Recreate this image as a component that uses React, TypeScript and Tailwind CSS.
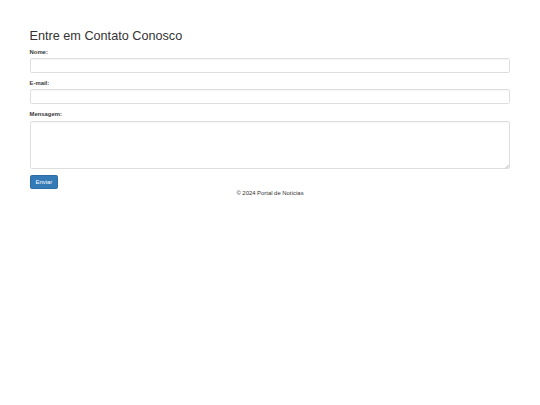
import React from "react";

export default function App() {
  return (
    <div
      className="min-h-[405px] w-[540px] bg-white pt-[21.09px] text-[#333]"
      style={{ fontFamily: '"Liberation Sans", Arial, Helvetica, sans-serif' }}
    >
      <div className="mx-auto w-[493.59px] px-[6.33px]">
        <h2 className="mt-[8.44px] mb-[4.22px] text-[12.66px] leading-[13.92px] font-normal text-[#333]">
          Entre em Contato Conosco
        </h2>
        <form>
          <div className="mb-[6.33px]">
            <label className="block mb-[2.11px] text-[5.9px] leading-[8.44px] font-bold text-[#3a3a3a]">Nome:</label>
            <input
              type="text"
              className="block w-full h-[14.34px] px-[5.06px] py-[2.53px] border border-[#dedede] rounded-[1.69px] bg-white shadow-[inset_0_0.42px_0.42px_rgba(0,0,0,0.075)] outline-none"
            />
          </div>
          <div className="mb-[6.33px]">
            <label className="block mb-[2.11px] text-[5.9px] leading-[8.44px] font-bold text-[#3a3a3a]">E-mail:</label>
            <input
              type="email"
              className="block w-full h-[14.34px] px-[5.06px] py-[2.53px] border border-[#dedede] rounded-[1.69px] bg-white shadow-[inset_0_0.42px_0.42px_rgba(0,0,0,0.075)] outline-none"
            />
          </div>
          <div className="mb-[6.33px]">
            <label className="block mb-[2.11px] text-[5.9px] leading-[8.44px] font-bold text-[#3a3a3a]">Mensagem:</label>
            <div className="relative">
              <textarea
                className="block w-full h-[48.1px] px-[5.06px] py-[2.53px] border border-[#dedede] rounded-[1.69px] bg-white shadow-[inset_0_0.42px_0.42px_rgba(0,0,0,0.075)] outline-none resize-none"
              />
              <svg
                className="absolute right-[1px] bottom-[1px] w-[4px] h-[4px]"
                viewBox="0 0 4 4"
              >
                <path d="M4 0.5 L0.5 4 M4 2.2 L2.2 4" stroke="#9a9a9a" strokeWidth="0.6" />
              </svg>
            </div>
          </div>
          <button
            type="button"
            className="block h-[14.34px] px-[5.06px] text-[5.9px] leading-[8.44px] text-white bg-[#337ab7] border border-[#2e6da4] rounded-[1.69px]"
          >
            Enviar
          </button>
        </form>
        <footer className="text-center text-[5.9px] leading-[8.44px] text-[#333]">
          © 2024 Portal de Notícias
        </footer>
      </div>
    </div>
  );
}
